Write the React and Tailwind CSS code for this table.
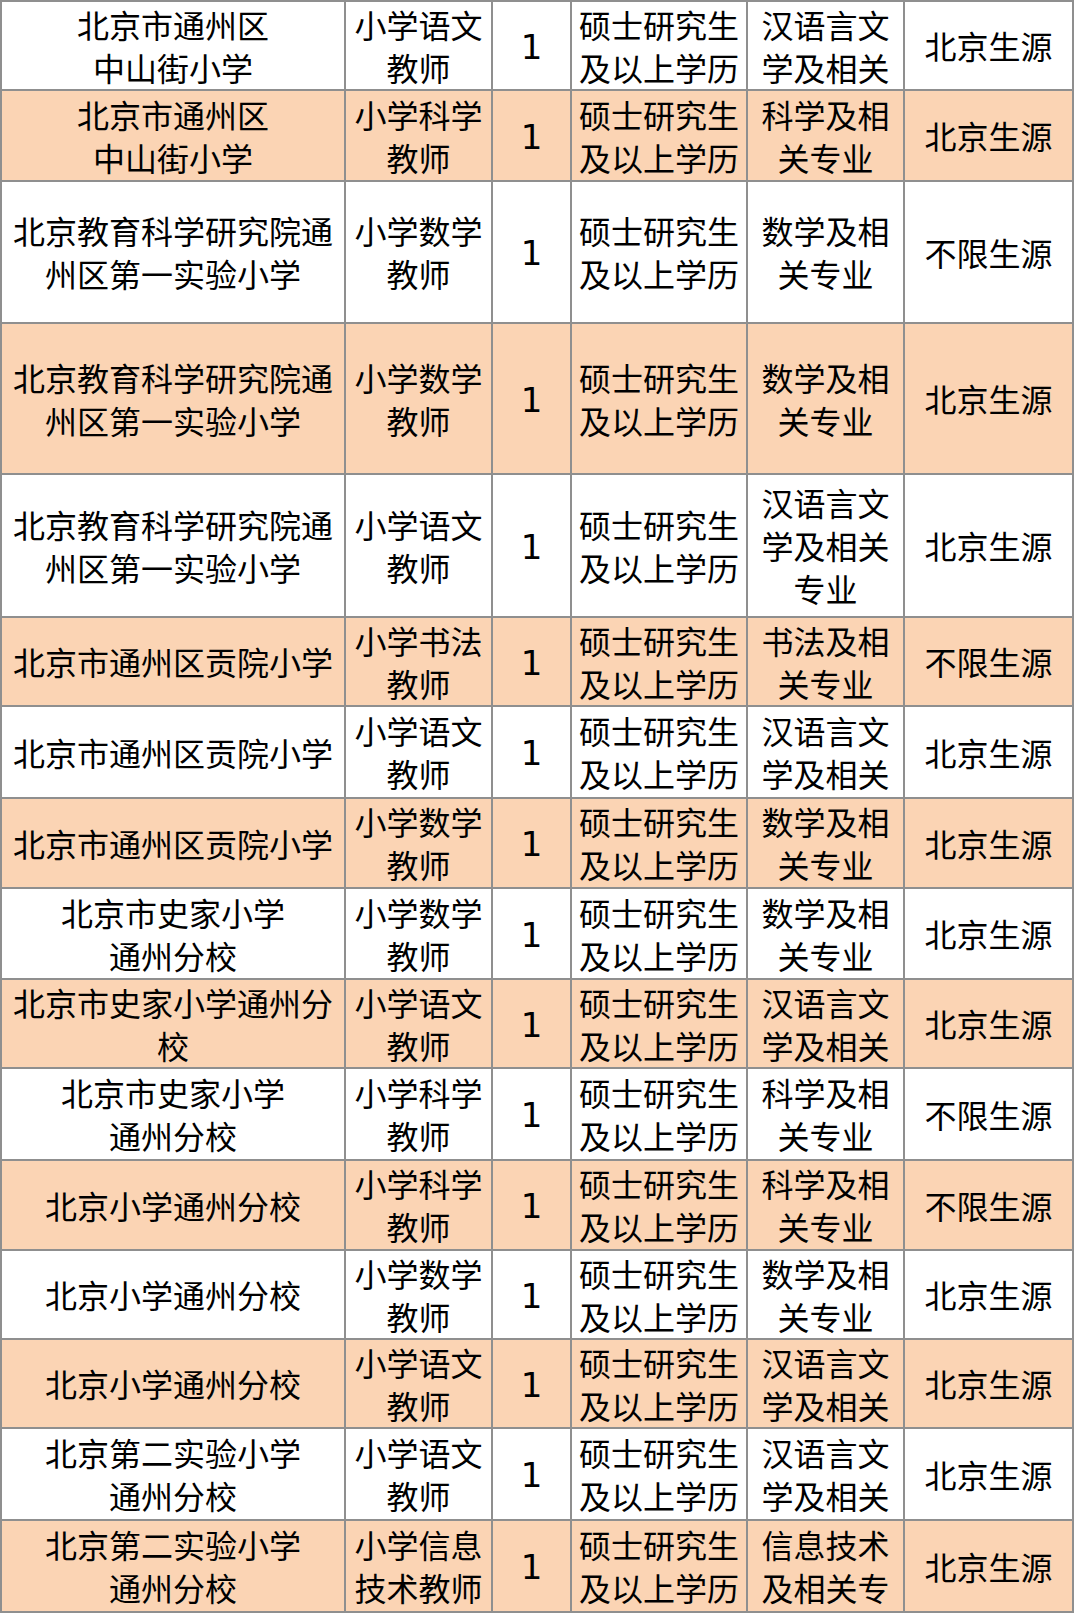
import React from "react";

const rows = [
  [["北京市通州区", "中山街小学"], ["小学语文", "教师"], ["汉语言文", "学及相关"], "北京生源"],
  [["北京市通州区", "中山街小学"], ["小学科学", "教师"], ["科学及相", "关专业"], "北京生源"],
  [["北京教育科学研究院通", "州区第一实验小学"], ["小学数学", "教师"], ["数学及相", "关专业"], "不限生源"],
  [["北京教育科学研究院通", "州区第一实验小学"], ["小学数学", "教师"], ["数学及相", "关专业"], "北京生源"],
  [["北京教育科学研究院通", "州区第一实验小学"], ["小学语文", "教师"], ["汉语言文", "学及相关", "专业"], "北京生源"],
  [["北京市通州区贡院小学"], ["小学书法", "教师"], ["书法及相", "关专业"], "不限生源"],
  [["北京市通州区贡院小学"], ["小学语文", "教师"], ["汉语言文", "学及相关"], "北京生源"],
  [["北京市通州区贡院小学"], ["小学数学", "教师"], ["数学及相", "关专业"], "北京生源"],
  [["北京市史家小学", "通州分校"], ["小学数学", "教师"], ["数学及相", "关专业"], "北京生源"],
  [["北京市史家小学通州分", "校"], ["小学语文", "教师"], ["汉语言文", "学及相关"], "北京生源"],
  [["北京市史家小学", "通州分校"], ["小学科学", "教师"], ["科学及相", "关专业"], "不限生源"],
  [["北京小学通州分校"], ["小学科学", "教师"], ["科学及相", "关专业"], "不限生源"],
  [["北京小学通州分校"], ["小学数学", "教师"], ["数学及相", "关专业"], "北京生源"],
  [["北京小学通州分校"], ["小学语文", "教师"], ["汉语言文", "学及相关"], "北京生源"],
  [["北京第二实验小学", "通州分校"], ["小学语文", "教师"], ["汉语言文", "学及相关"], "北京生源"],
  [["北京第二实验小学", "通州分校"], ["小学信息", "技术教师"], ["信息技术", "及相关专"], "北京生源"],
];

function Cell({ lines, peach, digit }) {
  return (
    <div
      className={
        "flex flex-col items-center justify-center overflow-hidden text-center whitespace-nowrap text-black " +
        (peach ? "bg-[#fbd4b4] " : "bg-white ") +
        (digit
          ? "text-[34px] leading-[40px] pt-[2px] [font-family:'DejaVu_Sans',sans-serif]"
          : "text-[32px] leading-[43px] [font-family:'Noto_Sans_CJK_SC',sans-serif]")
      }
    >
      {lines.map((l, i) => (
        <div key={i}>{l}</div>
      ))}
    </div>
  );
}

export default function App() {
  return (
    <div className="w-[1080px] min-h-[1614px] bg-white">
      <div className="w-[1074px] bg-[#8f8f8f] p-[2px] grid gap-[2px] grid-cols-[342px_145px_77px_174px_155px_167px] grid-rows-[87px_89px_140px_149px_141px_87px_90px_88px_89px_87px_90px_88px_87px_87px_90px_90px]">
        {rows.map((r, i) => {
          const peach = i % 2 === 1;
          return (
            <React.Fragment key={i}>
              <Cell lines={r[0]} peach={peach} />
              <Cell lines={r[1]} peach={peach} />
              <Cell lines={["1"]} peach={peach} digit />
              <Cell lines={["硕士研究生", "及以上学历"]} peach={peach} />
              <Cell lines={r[2]} peach={peach} />
              <Cell lines={[r[3]]} peach={peach} />
            </React.Fragment>
          );
        })}
      </div>
    </div>
  );
}
